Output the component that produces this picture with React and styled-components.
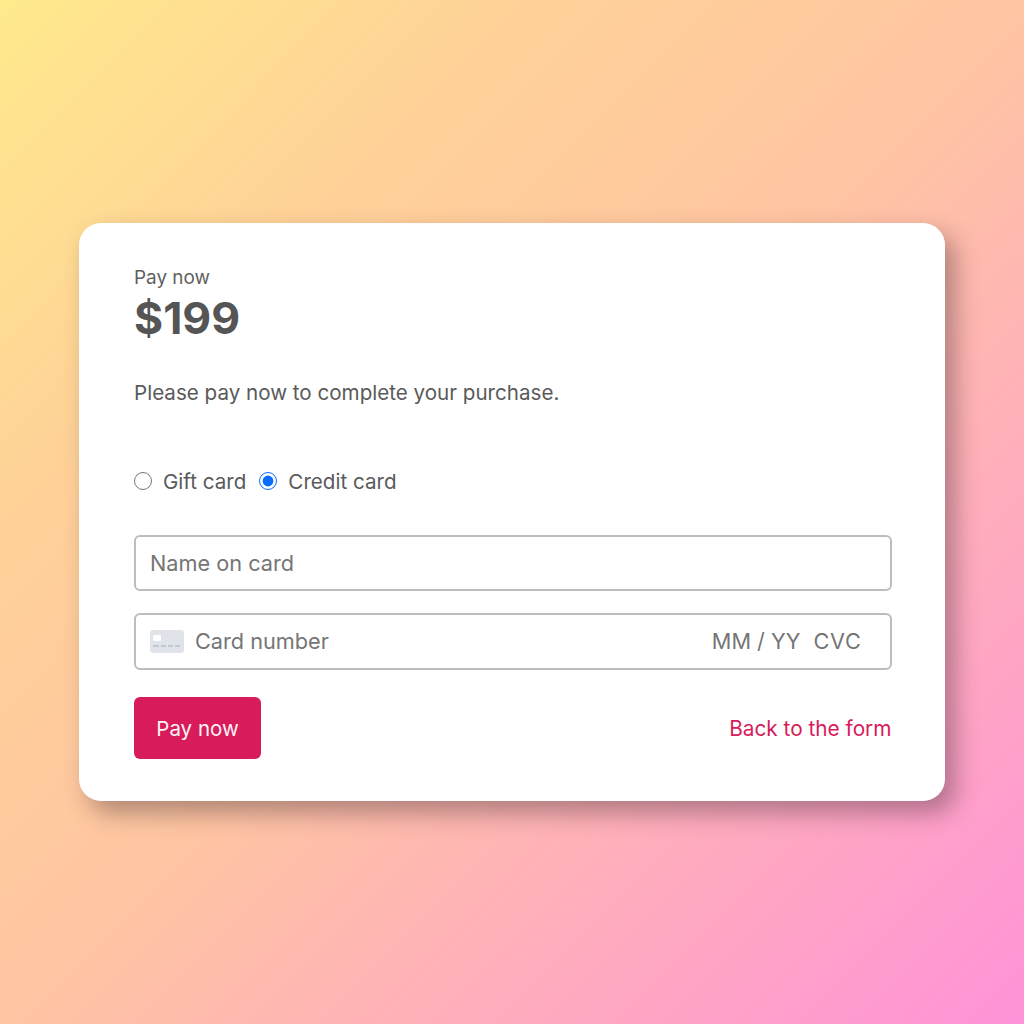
import styled, { createGlobalStyle } from "styled-components";

const GlobalStyle = createGlobalStyle`
  html, body {
    margin: 0;
    padding: 0;
  }
  body {
    font-family: Inter, "Liberation Sans", sans-serif;
  }
`;

const Page = styled.div`
  width: 1024px;
  height: 1024px;
  box-sizing: border-box;
  padding: 223px 0 0 79px;
  background: linear-gradient(135deg, #ffea8c 0%, #ffd298 25%, #ffc5a2 50%, #ffaebb 72%, #ff92d8 100%);
`;

const Card = styled.div`
  width: 865.5px;
  height: 577.5px;
  box-sizing: border-box;
  padding: 44px 53px 41px 55px;
  display: flex;
  flex-direction: column;
  background: #ffffff;
  border-radius: 22px;
  box-shadow: 10px 12px 24px rgba(60, 40, 50, 0.4);
`;

const Eyebrow = styled.div`
  font-size: 18.9px;
  line-height: 22px;
  color: #5f5f5f;
`;

const Amount = styled.div`
  font-size: 44.5px;
  line-height: 50px;
  font-weight: 700;
  color: #555555;
  margin-top: 3.5px;
`;

const Note = styled.p`
  margin: 37px 0 0;
  font-size: 20.6px;
  line-height: 26px;
  color: #5a5a5a;
`;

const RadioRow = styled.div`
  display: flex;
  align-items: center;
  gap: 13px;
  margin-top: 63px;
`;

const RadioLabel = styled.label`
  display: flex;
  align-items: center;
  gap: 11px;
  font-size: 20.6px;
  line-height: 26px;
  color: #5a5a5a;
`;

const Radio = styled.input`
  width: 18px;
  height: 18px;
  margin: 0 0 2px;
  accent-color: #0a6cff;
`;

const Field = styled.div`
  height: 56.5px;
  box-sizing: border-box;
  display: flex;
  align-items: center;
  padding: 0 28px 0 14px;
  border: 2px solid #bdbdbd;
  border-radius: 6px;
  background: #ffffff;
  margin-top: ${(p) => p.$top}px;
  font-size: 21.7px;
  color: #757575;
`;

const FieldText = styled.span`
  flex: 1;
`;

const CardDate = styled.span`
  margin-right: 13px;
`;

const CardCode = styled.span`
  letter-spacing: 0.7px;
`;

const CardIcon = styled.svg`
  width: 34px;
  height: 23px;
  margin-right: 11px;
  flex-shrink: 0;
`;

const Footer = styled.div`
  display: flex;
  align-items: center;
  justify-content: space-between;
  margin-top: 27.5px;
`;

const PayButton = styled.button`
  width: 127px;
  height: 62px;
  border: none;
  border-radius: 6px;
  background: #d81b5a;
  color: #fdf3f6;
  font-family: inherit;
  font-size: 20.5px;
  cursor: pointer;
`;

const BackLink = styled.a`
  font-size: 20.8px;
  color: #d81b5a;
  cursor: pointer;
`;

const App = () => {
  return (
    <>
      <GlobalStyle />
      <Page>
        <Card>
          <Eyebrow>Pay now</Eyebrow>
          <Amount>$199</Amount>
          <Note>Please pay now to complete your purchase.</Note>

          <RadioRow>
            <RadioLabel>
              <Radio type="radio" name="method" />
              Gift card
            </RadioLabel>
            <RadioLabel>
              <Radio type="radio" name="method" defaultChecked />
              Credit card
            </RadioLabel>
          </RadioRow>

          <Field $top={40}>
            <FieldText>Name on card</FieldText>
          </Field>

          <Field $top={22}>
            <CardIcon viewBox="0 0 34 23">
              <rect width="34" height="23" rx="3" fill="#e1e3ea" />
              <rect x="3" y="5" width="8" height="6" rx="1" fill="#ffffff" />
              <path d="M3 16h6M11 16h5M18 16h5M25 16h5" stroke="#b9c0d0" strokeWidth="1.6" />
            </CardIcon>
            <FieldText>Card number</FieldText>
            <CardDate>MM / YY</CardDate>
            <CardCode>CVC</CardCode>
          </Field>

          <Footer>
            <PayButton>Pay now</PayButton>
            <BackLink>Back to the form</BackLink>
          </Footer>
        </Card>
      </Page>
    </>
  );
};

export default App;
